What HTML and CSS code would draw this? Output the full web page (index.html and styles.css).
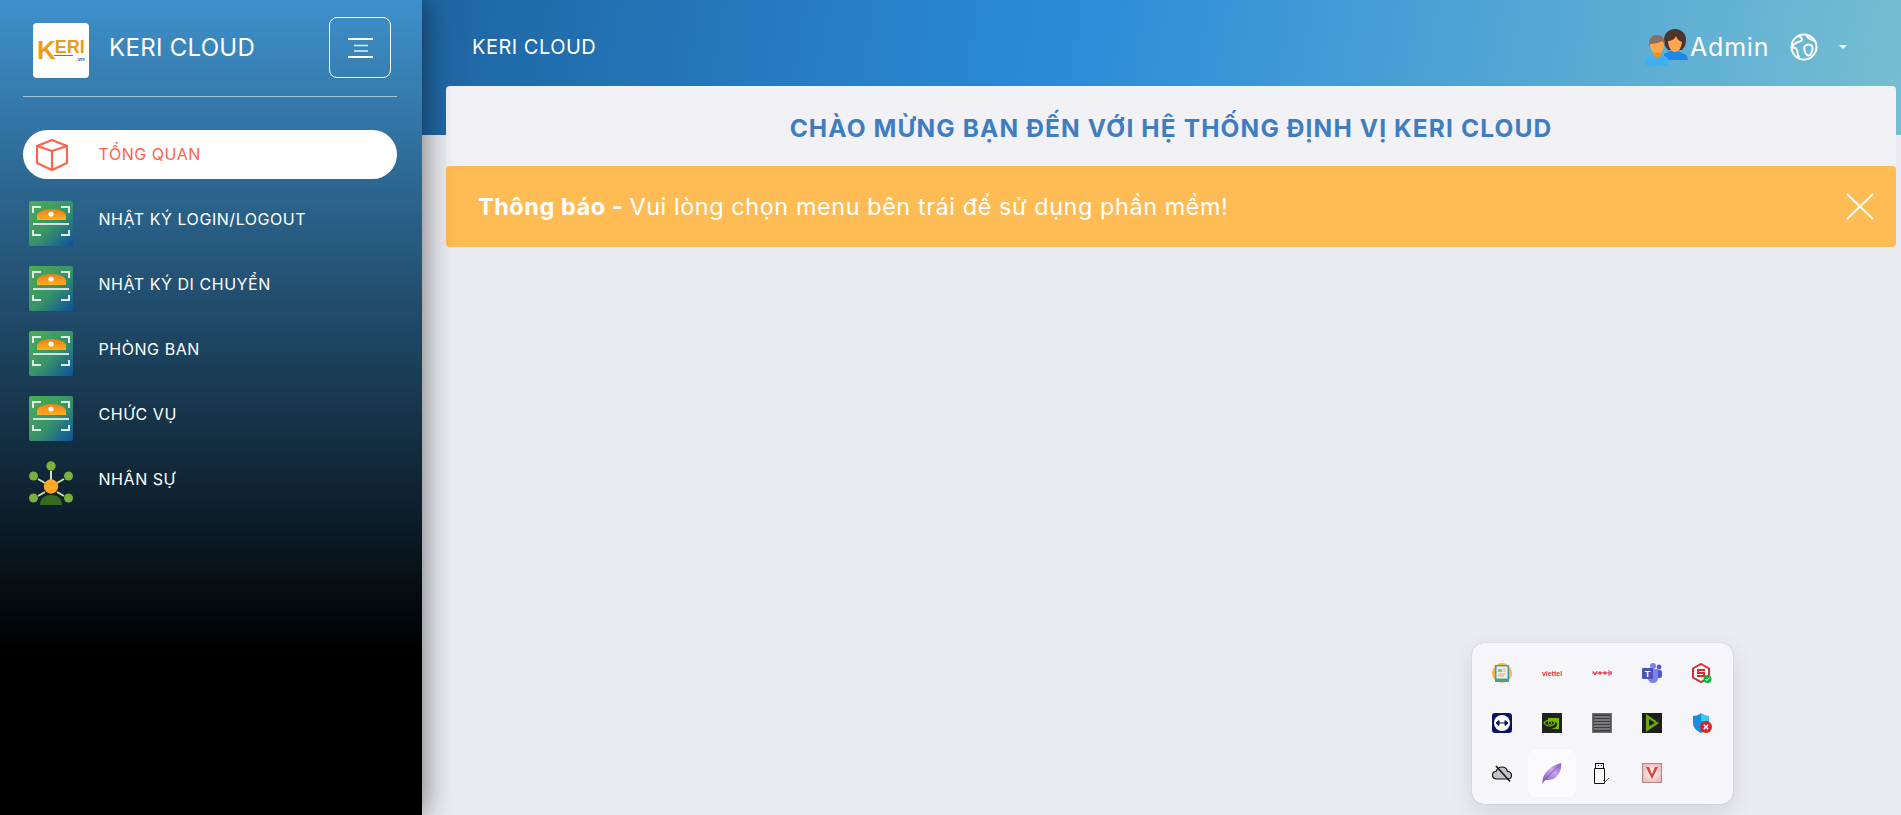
FILE: index.html
```html
<!DOCTYPE html>
<html lang="vi">
<head>
<meta charset="utf-8">
<title>KERI CLOUD</title>
<link rel="stylesheet" href="styles.css">
</head>
<body>
<svg class="defs" width="0" height="0" aria-hidden="true">
  <defs>
    <linearGradient id="scanbg" x1="0" y1="0" x2="1" y2="1">
      <stop offset="0" stop-color="#4caf50"/><stop offset=".55" stop-color="#37926a"/><stop offset="1" stop-color="#0d4fa0"/>
    </linearGradient>
    <linearGradient id="scandome" x1="0" y1="0" x2="0" y2="1">
      <stop offset="0" stop-color="#f57c12"/><stop offset="1" stop-color="#ffb01f"/>
    </linearGradient>
    <symbol id="scan" viewBox="0 0 44 45">
      <rect width="44" height="45" rx="2" fill="url(#scanbg)"/>
      <path d="M8 19v-4c0-4 7-7 14.500-7S37 11 37 15v4z" fill="url(#scandome)"/>
      <circle cx="22" cy="13" r="2.600" fill="#fff"/>
      <path d="M4 12V6h8M40 12V6h-8M4 29v5h8M40 29v5h-8" fill="none" stroke="#dcebe8" stroke-width="2"/>
      <path d="M4 23h36" stroke="#cfe3e3" stroke-width="2.200"/>
    </symbol>
  </defs>
</svg>

<div class="page">
  <aside class="sidebar">
    <div class="brand">
      <div class="logo">
        <span class="logo-k">K</span><span class="logo-rest">ERI</span><span class="logo-vn">.vn</span>
      </div>
      <span class="brand-name">KERI CLOUD</span>
      <button class="menu-btn" type="button" aria-label="Menu">
        <svg width="25" height="20" viewBox="0 0 25 20"><path d="M0 1h25M0 19h25" stroke="#fff" stroke-width="2" fill="none"/><path d="M6 7.500h14M6 13h14" stroke="#fff" stroke-opacity=".85" stroke-width="1.500" fill="none"/></svg>
      </button>
    </div>
    <nav class="nav">
      <a class="nav-item active">
        <svg class="nav-ico cube" width="32" height="32" viewBox="0 0 32 32" fill="none" stroke="#ff6347" stroke-width="2.200" stroke-linejoin="round"><path d="M16 1l15 6v17l-15 7-15-7V7z"/><path d="M1 7l15 5 15-5M16 12v19"/></svg>
        <span class="nav-text">TỔNG QUAN</span>
      </a>
      <a class="nav-item"><svg class="nav-ico"><use href="#scan"/></svg><span class="nav-text">NHẬT KÝ LOGIN/LOGOUT</span></a>
      <a class="nav-item"><svg class="nav-ico"><use href="#scan"/></svg><span class="nav-text">NHẬT KÝ DI CHUYỂN</span></a>
      <a class="nav-item"><svg class="nav-ico"><use href="#scan"/></svg><span class="nav-text">PHÒNG BAN</span></a>
      <a class="nav-item"><svg class="nav-ico"><use href="#scan"/></svg><span class="nav-text">CHỨC VỤ</span></a>
      <a class="nav-item">
        <svg class="nav-ico" viewBox="0 0 44 45">
          <path d="M22 10v9M9 18l7 4M35 18l-7 4M9 35l7-4M35 35l-7-4" stroke="#cfe3a8" stroke-width="2"/>
          <circle cx="22" cy="5" r="4.700" fill="#7cb03c"/><circle cx="4.500" cy="15" r="4.500" fill="#7cb03c"/><circle cx="39.500" cy="15" r="4.500" fill="#7cb03c"/><circle cx="4.500" cy="37" r="4.500" fill="#7cb03c"/><circle cx="39.500" cy="37" r="4.500" fill="#7cb03c"/>
          <path d="M11 44c0-7 5-10 11-10s11 3 11 10z" fill="#356b1c"/>
          <circle cx="22" cy="25.500" r="7.200" fill="#ffa726"/>
        </svg>
        <span class="nav-text">NHÂN SỰ</span>
      </a>
    </nav>
  </aside>

  <main class="main">
    <header class="topbar">
      <span class="top-title">KERI CLOUD</span>
      <div class="top-right">
        <svg class="people" width="43" height="37" viewBox="0 0 43 37">
          <path d="M19 25c3-1 5-3 6-3h8c1 0 3 2 6 3 2 .5 4 2 4 6H19z" fill="#1e88e5"/>
          <path d="M19 11C19 4 24 0 30 0s11 4 11 11c0 5-2 8-4 10H23c-2-2-4-5-4-10z" fill="#4e342e"/>
          <path d="M23 12c3 0 7-2 8-5 1 3 3 5 6 6-.5 5-3 10-7 10s-7-6-7-11z" fill="#ffa64d"/>
          <path d="M0 37c0-6 1-8 6-10l4-2h5l4 2c5 2 5 4 5 10z" fill="#3fb0f5"/>
          <path d="M4 16c0-7 3-10 8-10s8 3 8 10v1H4z" fill="#8d6e63"/>
          <path d="M5 15c3 0 10-1 12-3 1 1 2 2 2 3 0 5-3 10-7 10s-7-5-7-10z" fill="#ffa64d"/>
          <path d="M8 24h8v2c-2 3-6 3-8 0z" fill="#f9900f"/>
        </svg>
        <span class="admin">Admin</span>
        <svg class="globe" width="28" height="28" viewBox="0 0 28 28" fill="none" stroke="#fff" stroke-width="2" stroke-linejoin="round">
          <circle cx="14" cy="14" r="12.500"/>
          <path d="M9 2.500c1 2 3 2 3 4s-3 2-5 3-4 2-5 4M2 15c2-1 4 0 5 2s0 3 1 5 1 2.500 1 2.500M17 2c0 2 1 3 3 4 2 .5 4 1 5 3M15 13c2-2 6-2 7 0s0 6-1 8-4 2-5 0-3-6-1-8z"/>
        </svg>
        <span class="caret"></span>
      </div>
    </header>

    <section class="content">
      <div class="welcome">CHÀO MỪNG BẠN ĐẾN VỚI HỆ THỐNG ĐỊNH VỊ KERI CLOUD</div>
      <div class="alert">
        <span class="alert-text"><b>Thông báo - </b>Vui lòng chọn menu bên trái để sử dụng phần mềm!</span>
        <svg class="alert-x" width="28" height="27" viewBox="0 0 28 27"><path d="M1.500 1.500l25 24M26.500 1.500l-25 24" stroke="#fff" stroke-width="1.800" fill="none" stroke-linecap="round"/></svg>
      </div>
    </section>
  </main>
</div>

<div class="tray">
  <div class="cell">
    <svg width="22" height="22" viewBox="0 0 22 22"><circle cx="11" cy="11" r="10" fill="#f5b342"/><rect x="4" y="3" width="14" height="17" fill="#4f9b9b"/><rect x="5.500" y="4.500" width="11" height="12" fill="#eef2ec"/><path d="M7 7h4v3H7z" fill="#8bc48a"/><path d="M12 7h3M12 9h3M7 12h8M7 14h6" stroke="#e8a0a0"/></svg>
  </div>
  <div class="cell"><span class="mini-text">viettel</span></div>
  <div class="cell">
    <svg width="20" height="10" viewBox="0 0 20 10"><path d="M0 5h20" stroke="#e8505f" stroke-width="1"/><path d="M1 3l2 4 2-4M7 4h2v2H7zM12 4h2v2h-2zM17 2v6M19 3v4" stroke="#dc2f45" fill="none"/></svg>
  </div>
  <div class="cell">
    <svg width="20" height="20" viewBox="0 0 20 20"><circle cx="17" cy="4" r="2.400" fill="#5059c9"/><rect x="14" y="7" width="6" height="8" rx="2" fill="#5059c9"/><circle cx="11" cy="3" r="3" fill="#7b83eb"/><path d="M6 6h10v9c0 3-2 5-5 5s-5-2-5-5z" fill="#7b83eb"/><rect x="0" y="5" width="11" height="11" rx="1" fill="#4b53bc"/><text x="5.500" y="14" class="teams-t">T</text></svg>
  </div>
  <div class="cell">
    <svg width="20" height="21" viewBox="0 0 20 21"><path d="M9 1l8 4.500v9L9 19l-8-4.500v-9z" fill="#fff" stroke="#e2282f" stroke-width="2"/><path d="M13 7H6v3h6v3H5" fill="none" stroke="#e2282f" stroke-width="2"/><circle cx="15.500" cy="16" r="4" fill="#0bb33a"/><path d="M13.500 16l1.500 1.500 2.500-3" stroke="#fff" fill="none"/></svg>
  </div>

  <div class="cell">
    <svg width="20" height="20" viewBox="0 0 20 20"><rect width="20" height="20" rx="3" fill="#0a1264"/><circle cx="10" cy="10" r="8" fill="#fff"/><path d="M4 10h12M7 7.500L4 10l3 2.500zM13 7.500l3 2.500-3 2.500z" stroke="#0a1264" fill="#0a1264"/></svg>
  </div>
  <div class="cell">
    <svg width="20" height="20" viewBox="0 0 20 20"><rect width="20" height="20" fill="#1e2221"/><path d="M6 5h11v11H9c4-1 6-2 6-5s-5-4-9-2z" fill="#76b900"/><path d="M2 10c3-4 9-4 11 0-3 4-8 4-11 0z" fill="none" stroke="#76b900" stroke-width="1.200"/><circle cx="8" cy="10" r="1.800" fill="none" stroke="#76b900"/></svg>
  </div>
  <div class="cell">
    <svg width="20" height="20" viewBox="0 0 20 20"><rect width="20" height="20" fill="#6e6e6e"/><rect x="1.500" y="1.500" width="17" height="17" fill="#3c3c3c"/><path d="M2 4h16M2 7h16M2 10h16M2 13h16M2 16h16" stroke="#8c8c8c" stroke-width="1.400"/></svg>
  </div>
  <div class="cell">
    <svg width="20" height="20" viewBox="0 0 20 20"><rect width="20" height="20" fill="#1c1e1c"/><path d="M4 1l13 9-13 9z" fill="#6fa60a"/><path d="M7 6l6 4-6 3z" fill="#1c1e1c"/><path d="M14 9l5-5" stroke="#333"/></svg>
  </div>
  <div class="cell">
    <svg width="20" height="20" viewBox="0 0 20 20"><path d="M9 0c2 2 5 3 8 3v7c0 5-4 8-8 10-4-2-8-5-8-10V3c3 0 6-1 8-3z" fill="#1590dc"/><path d="M9 0c2 2 5 3 8 3v5H9z" fill="#3cc5ee"/><circle cx="14" cy="14" r="6" fill="#d9222f"/><path d="M11.800 11.800l4.400 4.400M16.200 11.800l-4.400 4.400" stroke="#fff" stroke-width="1.500"/></svg>
  </div>

  <div class="cell">
    <svg width="20" height="17" viewBox="0 0 20 17"><path d="M4.500 14C2 14 .5 12 .5 10S2 6.500 4 6.500C5 3.500 7.500 2 10 2c3 0 5 2 5.500 4.500 2 .2 4 1.700 4 4s-2 3.500-4 3.500z" fill="#c4c4c4" stroke="#111" stroke-width="1.200"/><path d="M4 1l14 15.500" stroke="#111" stroke-width="1.500"/></svg>
  </div>
  <div class="cell hovered">
    <svg width="20" height="21" viewBox="0 0 20 21"><defs><linearGradient id="quill" x1="0" y1="1" x2="1" y2="0"><stop offset="0" stop-color="#7a4bbd"/><stop offset=".6" stop-color="#c6a6ea"/><stop offset="1" stop-color="#8a5bc9"/></linearGradient></defs><path d="M19 0c1 6-2 12-6 15-3 2-7 2-10 2L0 21l1-6C3 8 11 2 19 0z" fill="url(#quill)"/><path d="M1 19C6 13 12 7 17 3" stroke="#7a4bbd" fill="none" stroke-width=".8"/></svg>
  </div>
  <div class="cell">
    <svg width="18" height="21" viewBox="0 0 18 21" fill="none" stroke="#111"><path d="M1.500 5.500h10v15h-10z" fill="#fff"/><rect x="2.500" y=".5" width="8" height="5" fill="#fff"/><path d="M5 2.500h1M8 2.500h1"/><path d="M10 17l2 2 4-4" stroke="#555"/></svg>
  </div>
  <div class="cell">
    <svg width="20" height="20" viewBox="0 0 20 20"><defs><radialGradient id="vbg"><stop offset="0" stop-color="#fff"/><stop offset="1" stop-color="#f0bcbc"/></radialGradient></defs><rect x=".5" y=".5" width="19" height="19" fill="url(#vbg)" stroke="#a88"/><path d="M4 4l6 12 6-12-3 0-3 7-3-7z" fill="#d8433c"/></svg>
  </div>
  <div class="cell"></div>
</div>
</body>
</html>
```
FILE: styles.css
```css
* { box-sizing: border-box; }
html, body { margin: 0; height: 100%; overflow: hidden; }
body {
  font-family: Inter, "Open Sans", "Liberation Sans", sans-serif;
  background: #ebecf1;
  color: #fff;
}
.defs { position: absolute; }
.page { display: flex; height: 815px; }

.sidebar {
  width: 422px;
  flex: none;
  position: relative;
  z-index: 2;
  padding: 17px 25px 0 23px;
  background: linear-gradient(180deg, #3e90cb 0, #000 650px);
  box-shadow: 2px 0 28px rgba(0, 0, 0, .5);
}
.brand {
  display: flex;
  align-items: center;
  height: 80px;
  padding: 0 6px 18px 10px;
  border-bottom: 1px solid rgba(255, 255, 255, .55);
}
.logo {
  width: 56px;
  height: 55px;
  flex: none;
  margin-top: 6px;
  background: #fff;
  border-radius: 4px;
  display: flex;
  align-items: flex-start;
  position: relative;
  padding: 18px 0 0 4px;
  font-family: "Liberation Sans", sans-serif;
  font-weight: 700;
}
.logo-k { font-size: 26px; line-height: 19px; color: #ee9c14; margin-right: -1px; }
.logo-rest { font-size: 18px; line-height: 13px; color: #e89a22; }
.logo::after {
  content: "";
  position: absolute;
  left: 21px;
  top: 32px;
  width: 19px;
  height: 1px;
  background: #7268c0;
}
.logo-vn { position: absolute; left: 43px; top: 34px; font-size: 6px; line-height: 5px; color: #4a55b5; }
.brand-name { margin-left: 20px; font-size: 24px; letter-spacing: .3px; flex: 1; line-height: 28px; }
.menu-btn {
  width: 62px;
  height: 61px;
  background: none;
  border: 1px solid #fff;
  border-radius: 8px;
  padding: 0;
  display: flex;
  align-items: center;
  justify-content: center;
}

.nav { display: flex; flex-direction: column; margin-top: 33px; }
.nav-item {
  height: 65px;
  display: flex;
  align-items: center;
  padding-left: 6px;
  color: #fff;
}
.nav-ico { width: 44px; height: 45px; flex: none; }
.nav-text { margin-left: 25.500px; padding-bottom: 9px; font-size: 16px; line-height: 20px; letter-spacing: .55px; }
.nav-item.active {
  height: 49px;
  margin-bottom: 12px;
  padding-left: 13px;
  background: #fff;
  border-radius: 25px;
  color: #ff6347;
}
.nav-item.active .nav-ico { width: 32px; height: 32px; }
.nav-item.active .nav-text { margin-left: 30.500px; padding-bottom: 1px; }

.main { flex: 1; min-width: 0; display: flex; flex-direction: column; }
.topbar {
  height: 135px;
  flex: none;
  display: flex;
  align-items: flex-start;
  justify-content: space-between;
  padding: 27px 0 0 50px;
  background: linear-gradient(100deg, #1f66a2 0, #2b8bd8 43%, #75bed2 100%);
}
.top-title { font-size: 20px; line-height: 40px; letter-spacing: .5px; }
.top-right { display: flex; align-items: center; height: 40px; padding-right: 54px; }
.people { margin-top: 1px; }
.admin { margin-left: 2px; font-size: 25px; line-height: 28px; letter-spacing: .8px; width: 100px; }
.caret {
  margin-left: 21px;
  border-top: 4px solid #fff;
  border-left: 4px solid transparent;
  border-right: 4px solid transparent;
}

.content { margin: -49px 5px 0 24px; position: relative; }
.welcome {
  height: 80px;
  background: #f1f1f6;
  border-radius: 4px 4px 0 0;
  display: flex;
  align-items: center;
  justify-content: center;
  color: #3f7dc1;
  font-size: 24.500px;
  font-weight: 700;
  letter-spacing: 1.12px;
  padding-top: 3px;
}
.alert {
  height: 81px;
  background: #ffbc54;
  border-radius: 4px;
  display: flex;
  align-items: center;
  justify-content: space-between;
  padding: 0 22px 0 32px;
  font-size: 23.400px;
  letter-spacing: .59px;
}
.alert-text b { font-weight: 700; }

.tray {
  position: absolute;
  right: 168px;
  bottom: 11px;
  width: 261px;
  height: 161px;
  padding: 5px 6px 6px 5px;
  display: grid;
  grid-template-columns: repeat(5, 50px);
  grid-auto-rows: 50px;
  background: #f6f6fa;
  border-radius: 12px;
  box-shadow: 0 0 1px rgba(0, 0, 0, .35), 0 8px 24px rgba(0, 0, 0, .1);
}
.cell { display: flex; align-items: center; justify-content: center; }
.cell.hovered { background: #fbfbfe; border-radius: 6px; margin: 1px; box-shadow: 0 0 1px rgba(0, 0, 0, .1); }
.mini-text { font: 700 7px "Liberation Sans", sans-serif; color: #d8344a; }
.teams-t { font: 700 9px "Liberation Sans", sans-serif; fill: #fff; text-anchor: middle; }
```
